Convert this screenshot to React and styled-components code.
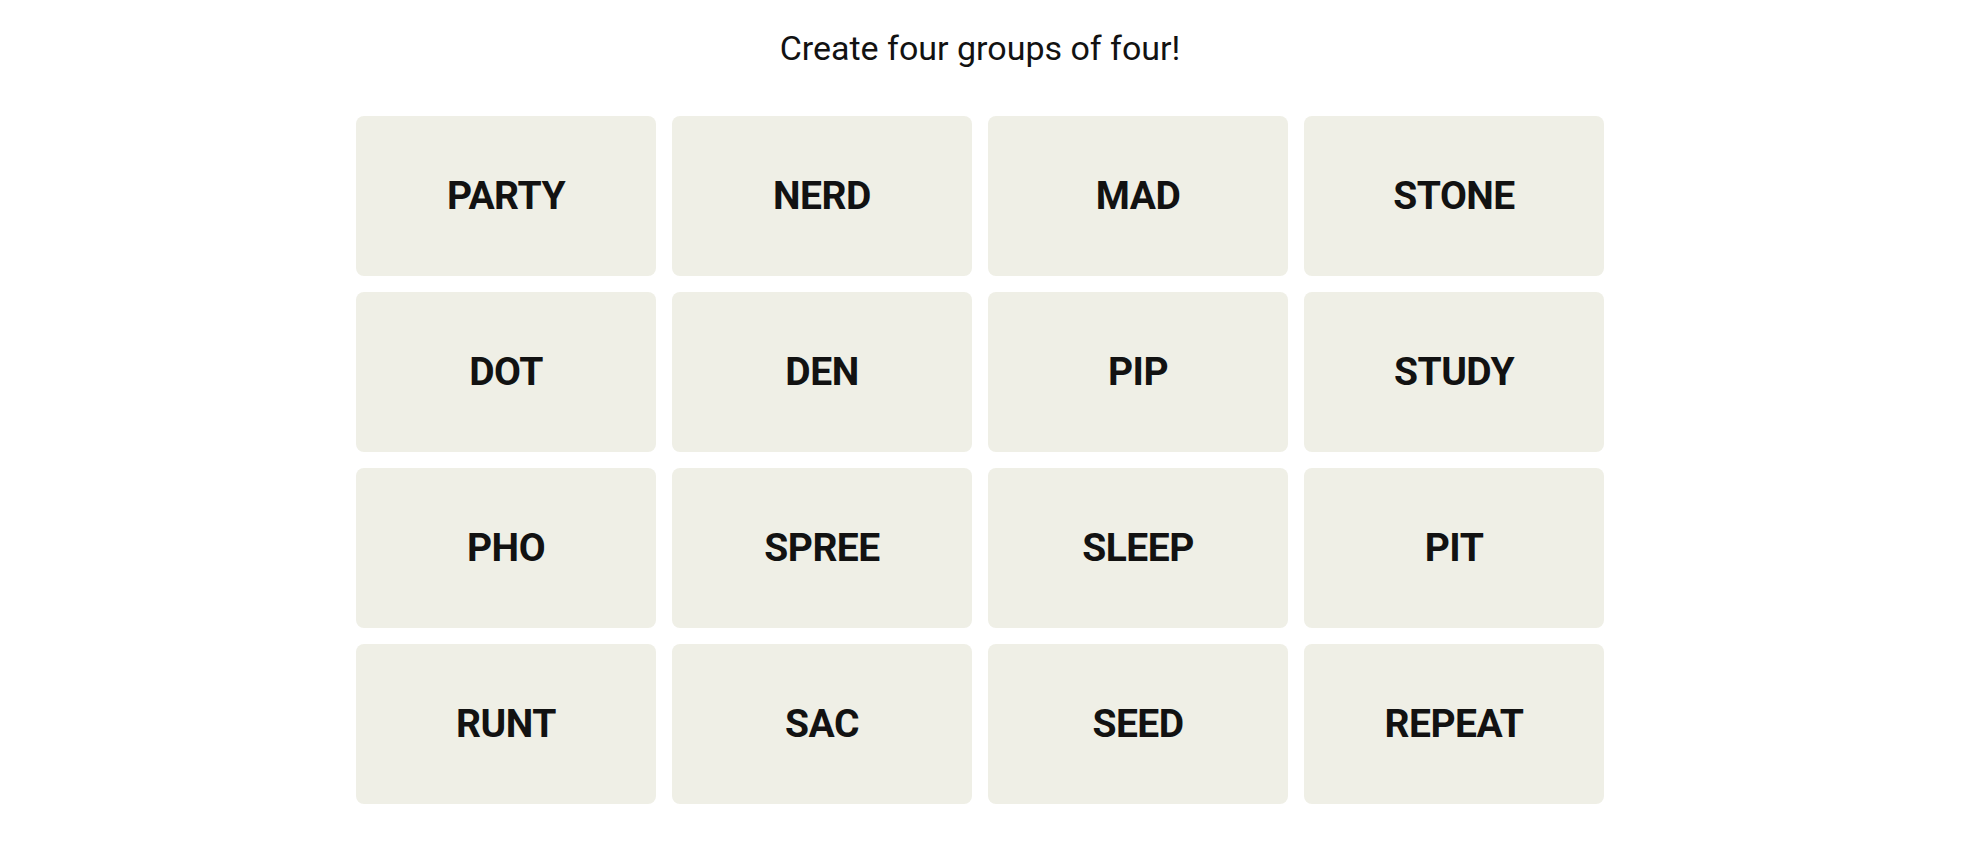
import React from "react";
import styled, { createGlobalStyle } from "styled-components";

const Global = createGlobalStyle`
  html, body { margin: 0; padding: 0; background: #ffffff; }
  body { font-family: "Roboto", "Liberation Sans", sans-serif; color: #121212; }
`;

const Page = styled.main`
  display: flex;
  flex-direction: column;
  align-items: center;
  padding: 26px 28px 0 0;
`;

const Title = styled.h1`
  margin: 0;
  font-family: "Roboto", "Liberation Sans", sans-serif;
  font-weight: 400;
  font-size: 34px;
  line-height: 44px;
  letter-spacing: 0;
  color: #121212;
`;

const Board = styled.section`
  margin-top: 46px;
  display: grid;
  grid-template-columns: repeat(4, 300px);
  grid-auto-rows: 160px;
  gap: 16px;
`;

const Tile = styled.button`
  border: none;
  border-radius: 8px;
  background: #efefe6;
  color: #121212;
  display: flex;
  align-items: center;
  justify-content: center;
  font-family: "Roboto", "Liberation Sans", sans-serif;
  font-weight: 700;
  font-size: 39px;
  letter-spacing: -0.5px;
  text-transform: uppercase;
  padding: 0;
  cursor: pointer;
`;

const words = [
  "PARTY", "NERD", "MAD", "STONE",
  "DOT", "DEN", "PIP", "STUDY",
  "PHO", "SPREE", "SLEEP", "PIT",
  "RUNT", "SAC", "SEED", "REPEAT",
];

export default function App() {
  return (
    <>
      <Global />
      <Page>
        <Title>Create four groups of four!</Title>
        <Board>
          {words.map((w) => (
            <Tile key={w}>{w}</Tile>
          ))}
        </Board>
      </Page>
    </>
  );
}
